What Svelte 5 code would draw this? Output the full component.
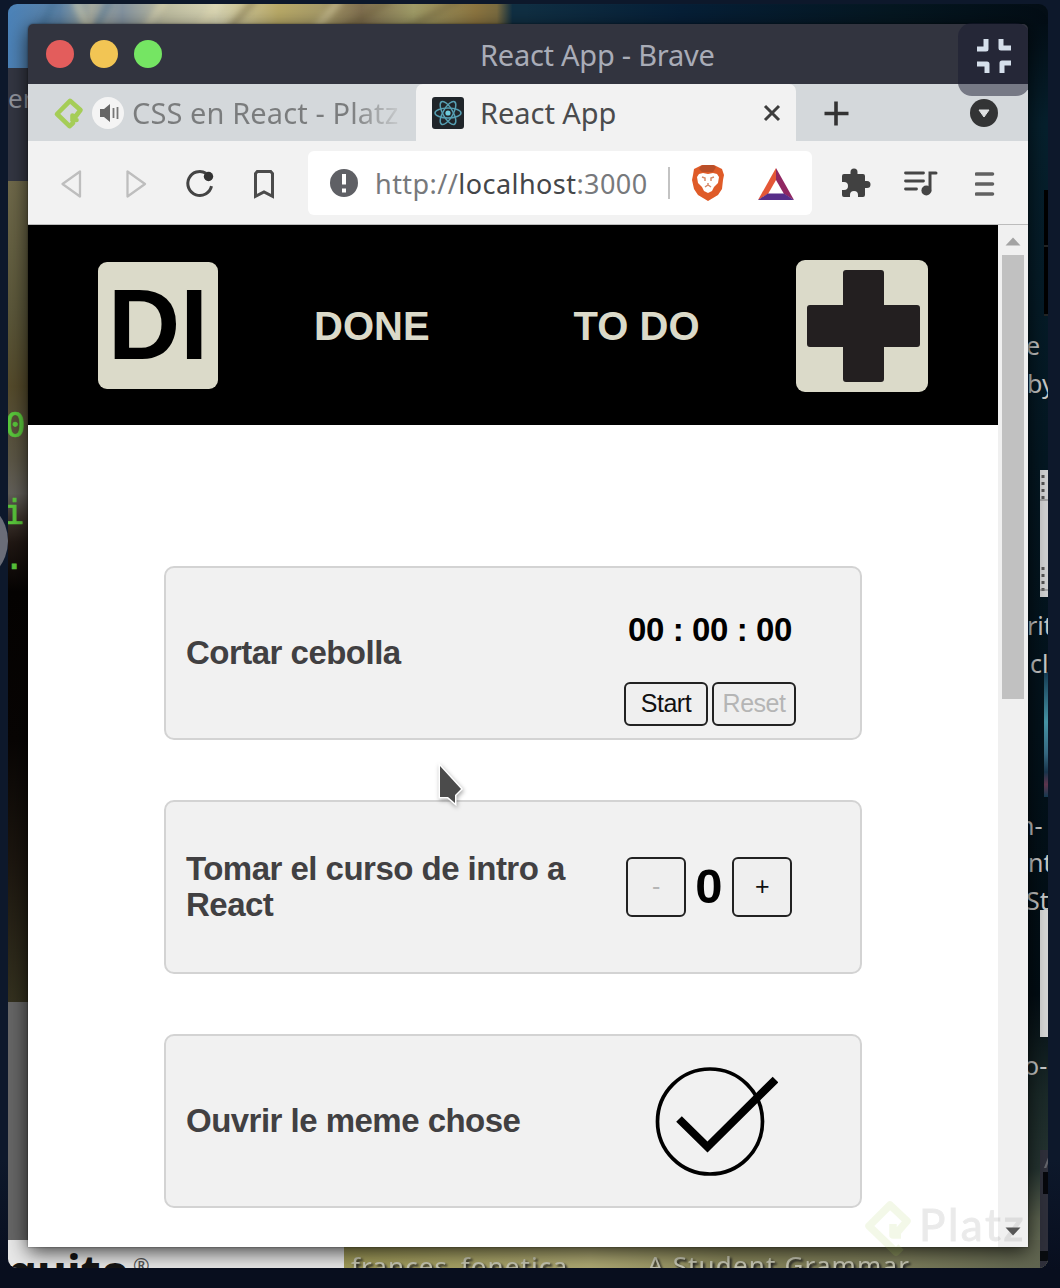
<script>
  const petals = [0, 60, 120];
  const brackets = [0, 90, 180, 270];
</script>

<main class="screen">
  <div class="side-handle"></div>
  <section class="desktop">
    <svg class="wallpaper" viewBox="8 4 1040 1264" width="1040" height="1264">
      <defs>
        <linearGradient id="top" x1="0" x2="1">
          <stop offset="0" stop-color="#4b82b8" /><stop offset=".1" stop-color="#5d83a6" />
          <stop offset=".16" stop-color="#a5aaa0" /><stop offset=".22" stop-color="#8493a0" />
          <stop offset=".3" stop-color="#bdbca0" /><stop offset=".4" stop-color="#d8d5b4" />
          <stop offset=".52" stop-color="#b9aa68" /><stop offset=".6" stop-color="#a89c69" />
          <stop offset=".68" stop-color="#806f50" /><stop offset=".78" stop-color="#a09c68" />
          <stop offset=".9" stop-color="#8c7540" /><stop offset=".94" stop-color="#7b6c40" /><stop offset=".97" stop-color="#102f43" /><stop offset="1" stop-color="#102f43" />
        </linearGradient>
        <linearGradient id="topRight" x1="0" x2="1">
          <stop offset="0" stop-color="#102f43" /><stop offset=".3" stop-color="#061f37" /><stop offset=".7" stop-color="#051721" /><stop offset="1" stop-color="#030d15" />
        </linearGradient>
        <linearGradient id="left" x1="0" y1="0" x2="0" y2="1">
          <stop offset="0" stop-color="#6f694a" /><stop offset=".16" stop-color="#5b573a" />
          <stop offset=".25" stop-color="#544a2b" /><stop offset=".34" stop-color="#5b5646" />
          <stop offset=".38" stop-color="#625f59" /><stop offset=".41" stop-color="#3e352e" />
          <stop offset=".44" stop-color="#201713" /><stop offset=".5" stop-color="#050302" />
          <stop offset=".68" stop-color="#080504" /><stop offset=".83" stop-color="#1c160f" /><stop offset="1" stop-color="#34311f" />
        </linearGradient>
        <linearGradient id="right" x1="0" y1="0" x2="0" y2="1">
          <stop offset="0" stop-color="#030e16" /><stop offset=".08" stop-color="#06202d" />
          <stop offset=".35" stop-color="#041722" /><stop offset=".78" stop-color="#020d14" />
          <stop offset=".86" stop-color="#1a2928" /><stop offset=".92" stop-color="#253431" />
          <stop offset=".96" stop-color="#5b624f" /><stop offset="1" stop-color="#737a5f" />
        </linearGradient>
        <linearGradient id="bottom" x1="0" x2="1">
          <stop offset="0" stop-color="#9f9a58" /><stop offset=".35" stop-color="#aea973" />
          <stop offset=".55" stop-color="#89875b" /><stop offset=".8" stop-color="#7c7d5b" /><stop offset="1" stop-color="#5f6450" />
        </linearGradient>
        <linearGradient id="thumb" x1="0" y1="0" x2="0" y2="1">
          <stop offset="0" stop-color="#153c55" /><stop offset=".4" stop-color="#4796a8" /><stop offset=".65" stop-color="#376b84" /><stop offset=".8" stop-color="#18354c" /><stop offset=".9" stop-color="#60364e" /><stop offset="1" stop-color="#153b52" />
        </linearGradient>
        <filter id="soft"><feGaussianBlur stdDeviation="3" /></filter>
      </defs>
      <rect x="524" y="4" width="524" height="64" fill="url(#topRight)" />
      <rect x="8" y="4" width="520" height="64" fill="url(#top)" />
      <g filter="url(#soft)" fill="none" stroke-width="7" opacity=".45">
        <path d="M55 0 40 30M110 0 90 40" stroke="#3c6992" />
        <path d="M75 0 90 34M165 0 145 30M220 0 195 35M340 0 315 30" stroke="#e5ddb2" />
        <path d="M255 0 230 28M390 0 340 32M460 0 400 32" stroke="#71643d" />
      </g>
      <rect x="8" y="68" width="30" height="113" fill="#333642" />
      <rect x="8" y="181" width="30" height="822" fill="url(#left)" />
      <rect x="8" y="1002" width="30" height="240" fill="#666" />
      <rect x="1020" y="24" width="28" height="1244" fill="url(#right)" />
      <rect x="8" y="1240" width="336" height="28" fill="#e8e8e8" />
      <rect x="344" y="1240" width="704" height="28" fill="url(#bottom)" />
      <rect x="1044" y="190" width="4" height="126" fill="#000" />
      <path d="M1044 246h4M1044 315h4" stroke="#464b4b" />
      <rect x="1040" y="470" width="8" height="127" fill="#d0d1d2" />
      <path d="M1043 475v25M1043 567v27" stroke="#555" stroke-width="3" stroke-dasharray="3 4" />
      <path d="M1040 500h8M1040 590h8" stroke="#777" />
      <rect x="1044" y="672" width="4" height="125" fill="url(#thumb)" />
      <rect x="1040" y="910" width="8" height="127" fill="#d6d7d6" />
      <rect x="1040" y="1150" width="8" height="118" fill="#2f303b" />
      <rect x="1043" y="1172" width="5" height="22" fill="#07080d" />
      <path d="M1040 1256h8" stroke="#090c10" stroke-width="10" />

      <g class="icon-text">
        <text x="1026" y="355">e</text><text x="1027" y="393">by</text>
        <text x="1027" y="635">rit</text><text x="1030" y="673">cl</text>
        <text x="1019" y="835">n-</text><text x="1028" y="872">nt</text>
        <text x="1026" y="910">St</text><text x="1024" y="1075">o-</text>
        <text x="1044" y="1168" opacity=".35">A</text>
      </g>
      <text x="8" y="108" class="window-text">en</text>
      <g class="terminal"><text x="5" y="437">0</text><text x="4" y="524">i</text><text x="4" y="569">.</text></g>
      <text x="8" y="1289" class="brand">quito</text><text x="133" y="1273" class="registered">®</text>
      <g class="desktop-label">
        <text x="351" y="1276" textLength="216">frances_fonetica</text>
        <text x="647" y="1275" textLength="262">A Student Grammar</text>
      </g>
    </svg>

    <article class="window">
      <header class="titlebar">
        <div class="lights"><i class="red"></i><i class="yellow"></i><i class="green"></i></div>
        <span class="window-title">React App - Brave</span>
      </header>

      <nav class="tabs">
        <div class="tab muted">
          <svg width="32" height="34" viewBox="0 0 32 34"><path d="M20.500 24.500 28.500 14 18 4.800 5 18 17.500 30.200l3.500-3.200M20.500 19.500v4.500h4" fill="none" stroke="#a5cd57" stroke-width="4.600" stroke-linejoin="round" stroke-linecap="round" /></svg>
          <svg class="audio" width="32" height="32" viewBox="0 0 32 32"><circle cx="16" cy="16" r="16" fill="#f4f4f4" /><path d="M8 12h4l6-5v18l-6-5H8z" fill="#666" /><path d="M21.500 11v10M25.500 10v12" stroke="#777" stroke-width="1.800" /></svg>
          <span class="tab-title faded">CSS en React - Platz</span>
        </div>
        <div class="tab active">
          <svg width="32" height="32" viewBox="0 0 32 32">
            <rect width="32" height="32" rx="3" fill="#20252a" />
            <g fill="none" stroke="#569fb3" stroke-width="1.500">
              {#each petals as angle}<ellipse cx="16" cy="16" rx="13" ry="5" transform="rotate({angle} 16 16)" />{/each}
            </g><circle cx="16" cy="16" r="2.600" fill="#70cbdc" />
          </svg>
          <span class="tab-title current">React App</span>
          <svg class="close" width="20" height="20" viewBox="0 0 20 20"><path d="m3 3 14 14M17 3 3 17" stroke="#3d3d3d" stroke-width="3" /></svg>
        </div>
        <svg class="new-tab" width="26" height="26" viewBox="0 0 26 26"><path d="M13 1.500v24M1.500 13.500h24" stroke="#333" stroke-width="3.600" /></svg>
        <svg class="tab-menu" width="28" height="28" viewBox="0 0 28 28"><circle cx="14" cy="14" r="14" fill="#333435" /><path d="M9 11h10L14 18z" fill="#dfe1e2" stroke="#dfe1e2" stroke-linejoin="round" /></svg>
      </nav>

      <div class="toolbar">
        <div class="nav-icons">
          <svg width="32" height="32" viewBox="0 0 32 32"><path d="M24 4.500v25L6.500 17z" fill="none" stroke="#bebebe" stroke-width="2.300" stroke-linejoin="round" /></svg>
          <svg width="32" height="32" viewBox="0 0 32 32"><path d="M7.500 4.500v25L25 17z" fill="none" stroke="#bebebe" stroke-width="2.300" stroke-linejoin="round" /></svg>
          <svg width="32" height="32" viewBox="0 0 32 32"><path d="M22 6.200a12 12 0 1 0 5.500 13" fill="none" stroke="#444" stroke-width="3" /><circle cx="24.500" cy="9.500" r="4.700" fill="#333" /></svg>
          <svg width="32" height="32" viewBox="0 0 32 32"><path d="M7.500 29.300V6.500l1.800-2h13.400l1.800 2v22.800L16 25z" fill="none" stroke="#4b4b4b" stroke-width="3" /></svg>
        </div>
        <div class="address">
          <svg width="28" height="28" viewBox="0 0 28 28"><circle cx="14" cy="14" r="14" fill="#5f6065" /><path d="M14 5v10.500M14 19.500v4" stroke="#fff" stroke-width="4" /></svg>
          <span class="url">http://<b>localhost</b>:3000</span>
          <i class="separator"></i>
          <svg class="brave" width="34" height="38" viewBox="0 0 34 38"><path d="m7 3 4-2h12l4 2 4 2 2 6-1 5-1 9-4 6-10 6-10-6-4-6-2-9 1-5 1-6z" fill="#df5b28" /><path d="m10 2 3-1h9l3 2-3 5H11L8 5z" fill="#b94f29" /><path d="m8 10 4-1 5 1 5-1 4 1 2 3-1 6-4 4-2 4-4 2-4-2-2-4-4-4-1-6z" fill="#fff" /><path d="m11 13 3 1v3M23 13l-3 1v3M17 19v3m-3 1 3-2 3 2" fill="none" stroke="#d68a6a" stroke-width="1.500" /></svg>
          <svg class="bat" width="36" height="32" viewBox="0 0 36 32"><path d="M18 0 0 32l10-6 8-14z" fill="#e45737" /><path d="m18 0 18 32-10-6-8-14z" fill="#902762" /><path d="m0 32 10-6.500h16L36 32z" fill="#572e89" /></svg>
        </div>
        <svg class="extension" width="30" height="30" viewBox="0 0 30 30"><path d="M3 6h6.500V4a3.500 3.500 0 0 1 7 0v2h5.500q2 0 2 2v5h2a3.500 3.500 0 0 1 0 7h-2v7q0 2-2 2h-5v-2a3.500 3.500 0 0 0-8 0v2H3q-2 0-2-2v-5h2a4 4 0 0 0 0-8H1V8q0-2 2-2z" fill="#414141" /></svg>
        <svg class="playlist" width="34" height="28" viewBox="0 0 34 28"><path d="M1.500 4h18M1.500 12h18M1.500 20h11" stroke="#454545" stroke-width="2.800" stroke-linecap="round" /><path d="M26 22V4h6" fill="none" stroke="#454545" stroke-width="3" stroke-linecap="round" /><circle cx="22.300" cy="21.500" r="4.900" fill="#454545" /></svg>
        <svg class="menu" width="20" height="26" viewBox="0 0 20 26"><path d="M1.500 4h16M1.500 14h16M1.500 24h16" stroke="#616161" stroke-width="3.600" stroke-linecap="round" /></svg>
      </div>

      <div class="viewport">
        <div class="page">
          <header class="app-header">
            <div class="logo">DI</div>
            <div class="links"><span>DONE</span><span>TO DO</span></div>
            <div class="add"><svg width="132" height="132" viewBox="0 0 132 132"><path d="M50 10h35q3 0 3 3v32h33q3 0 3 3v36q0 3-3 3H88v32q0 3-3 3H50q-3 0-3-3V87H14q-3 0-3-3V48q0-3 3-3h33V13q0-3 3-3z" fill="#231f20" /></svg></div>
          </header>
          <div class="cards">
            <section class="card">
              <h2>Cortar cebolla</h2>
              <div class="timer"><strong>00 : 00 : 00</strong><div class="buttons"><button>Start</button><button disabled>Reset</button></div></div>
            </section>
            <section class="card">
              <h2>Tomar el curso de intro a React</h2>
              <div class="counter"><button disabled>-</button><strong>0</strong><button>+</button></div>
            </section>
            <section class="card">
              <h2>Ouvrir le meme chose</h2>
              <svg class="check" width="124" height="112" viewBox="0 0 124 112"><circle cx="56" cy="56.500" r="52.500" fill="none" stroke="#000" stroke-width="3.700" /><path d="M25 54 53.500 82 121.500 14.500" fill="none" stroke="#000" stroke-width="8" /></svg>
            </section>
          </div>
        </div>
        <aside class="scrollbar">
          <svg width="30" height="30" viewBox="0 0 30 30"><path d="M7.500 20.500 15 12.500l7.500 8z" fill="#a3a3a3" /></svg>
          <i></i>
          <svg class="down" width="30" height="30" viewBox="0 0 30 30"><path d="M7.500 10.500h15l-7.500 8z" fill="#555" /></svg>
        </aside>
      </div>
    </article>

    <div class="watermark">
      <svg width="52" height="60" viewBox="0 0 52 60"><path d="M33 39 45 25 28 9 7 30l27 26 5-5M31 28v11h8" fill="none" stroke="#a7cb55" stroke-width="7.500" stroke-linejoin="round" /></svg>
      <span>Platz</span>
    </div>
    <svg class="cursor" width="34" height="46" viewBox="0 0 34 46"><path d="M5 5v31h8l7 6v-8l6-6z" fill="#4b4b4b" stroke="#fff" stroke-width="3" paint-order="stroke" /></svg>
    <div class="shrink">
      <svg width="34" height="36" viewBox="-17 -18 34 36">
        {#each brackets as angle}<path d="M7-17v9h10" transform="rotate({angle})" fill="none" stroke="#d5dfeb" stroke-width="5" stroke-linejoin="round" />{/each}
      </svg>
    </div>
  </section>
</main>

<style>
  :global(body) { margin: 0; background: #0d172a; }
  :global(*) { box-sizing: border-box; }
  svg { display: block; flex: none; }
  .screen { position: relative; width: 1060px; height: 1288px; padding: 4px 12px 20px 8px; overflow: hidden; background: linear-gradient(#0d182b 0 1160px, #080e1e 1270px); font-family: "Liberation Sans", Arial, sans-serif; }
  .side-handle { position: absolute; left: -68px; top: 500px; width: 76px; height: 82px; border-radius: 50%; background: #6a6d78; }
  .desktop { position: relative; width: 1040px; height: 1264px; overflow: hidden; border-radius: 9px; }
  .wallpaper { position: absolute; inset: 0; }
  .icon-text { font: 25px "Noto Sans", sans-serif; fill: #c8c9c9; }
  .window-text { font: 26px "Noto Sans", sans-serif; fill: #91949d; }
  .terminal { font: bold 34px "DejaVu Sans Mono", monospace; fill: #5ac93c; }
  .terminal text { font-weight: 400; stroke: #5ac93c; stroke-width: .7px; }
  .brand { font: bold 46px "Noto Sans", sans-serif; fill: #151515; }
  .registered { font: 20px "Noto Sans", sans-serif; fill: #555; }
  .desktop-label { font: 26px "Noto Sans", sans-serif; fill: #c9c9b5; filter: drop-shadow(2px 2px 1px #222); }
  .window { position: absolute; left: 20px; top: 20px; width: 1000px; height: 1223px; border-radius: 5px 5px 0 0; overflow: hidden; box-shadow: 0 5px 20px #000b, 0 0 2px #0008; }
  .titlebar { height: 60px; padding: 0 32px 0 18px; display: flex; align-items: center; background: #32343f; }
  .lights { display: flex; gap: 16px; }
  .lights i { width: 28px; height: 28px; border-radius: 50%; }
  .red { background: #e35d5c; } .yellow { background: #f2c554; } .green { background: #75e563; }
  .window-title { margin-left: 318px; color: #a9acb7; font: 29px/60px "Noto Sans", sans-serif; letter-spacing: -.25px; white-space: pre; padding-top: 2px; }
  .tabs { height: 57px; display: flex; align-items: center; background: #d4d8db; }
  .tab { height: 57px; display: flex; align-items: center; }
  .muted { width: 388px; padding-left: 24px; }
  .audio { margin-left: 8px; }
  .tab-title { font: 29px/57px "Noto Sans", sans-serif; letter-spacing: -.05px; white-space: pre; }
  .faded { margin-left: 8px; width: 272px; overflow: hidden; color: transparent; background: linear-gradient(90deg, #7a7c7d 80%, #c7cacc 98%); background-clip: text; letter-spacing: .1px; }
  .active { width: 380px; padding: 0 14px 0 16px; background: #f2f2f2; border-radius: 7px 7px 0 0; }
  .current { margin-left: 16px; color: #4a4b4d; }
  .close { margin-left: auto; }
  .new-tab { margin-left: 27px; }
  .tab-menu { margin: 0 30px 0 auto; }
  .toolbar { height: 84px; padding: 0 33px 0 28px; display: flex; align-items: center; background: #f2f2f2; border-bottom: 1px solid #bcbcbc; }
  .nav-icons { display: flex; gap: 32px; }
  .address { width: 504px; height: 64px; display: flex; align-items: center; margin-left: 28px; padding: 0 18px 0 22px; background: #fff; border-radius: 6px; }
  .url { width: 272px; margin-left: 17px; color: #77797c; font: 27px/62px "Noto Sans", sans-serif; letter-spacing: .45px; padding-top: 2px; white-space: pre; }
  .url b { color: #444649; font-weight: 400; }
  .separator { width: 2px; height: 32px; margin-left: 21px; background: #c3c3c3; }
  .brave { margin-left: 21px; }
  .bat { margin-left: auto; margin-top: 3px; }
  .extension { margin-left: 29px; }
  .playlist { margin-left: 33px; }
  .menu { margin-left: auto; }
  .viewport { height: 1022px; display: flex; background: #fff; }
  .page { width: 970px; }
  .app-header { height: 200px; padding: 1px 70px 0; display: flex; align-items: center; background: #000; }
  .logo { width: 120px; height: 127px; border-radius: 9px; background: #dbdac9; font: bold 100px/124px "Liberation Sans", sans-serif; text-align: center; padding-left: 0; color: #000; }
  .links { display: flex; gap: 144px; margin-left: 96px; padding-top: 2px; color: #dbdac9; font-size: 40px; font-weight: bold; }
  .add { width: 132px; height: 132px; margin-left: auto; border-radius: 9px; background: #dbdac9; }
  .cards { display: flex; flex-direction: column; gap: 60px; padding: 141px 136px 0; }
  .card { height: 174px; display: flex; align-items: center; padding: 0 0 0 20px; background: #f1f1f1; border: 2px solid #d3d3d3; border-radius: 10px; }
  h2 { width: 420px; margin: 0; color: #414042; font-size: 33px; line-height: 36px; letter-spacing: -.52px; }
  .timer { width: 172px; margin-left: 18px; padding-top: 44px; display: flex; flex-direction: column; align-items: center; align-self: flex-start; }
  .timer strong { font-size: 33px; line-height: 36px; letter-spacing: -.4px; }
  .buttons { display: flex; gap: 4px; margin-top: 34px; }
  button { width: 84px; height: 44px; padding: 0 0 2px; color: #111; background: #efefef; border: 2px solid #222; border-radius: 6px; font: 25px "Liberation Sans", sans-serif; letter-spacing: -.5px; }
  button:disabled { color: #b5b5b5; }
  .counter { display: flex; align-items: center; margin-left: 20px; }
  .counter button { width: 60px; height: 60px; }
  .counter strong { width: 46px; text-align: center; font-size: 49px; line-height: 60px; margin-top: -2px; }
  .check { margin-left: 48px; }
  .scrollbar { width: 30px; display: flex; flex-direction: column; background: #f0f0f0; }
  .scrollbar i { width: 22px; height: 444px; margin-left: 4px; background: #c1c1c1; }
  .down { margin-top: auto; }
  .watermark { position: absolute; left: 854px; top: 1192px; width: 166px; height: 60px; display: flex; align-items: center; overflow: hidden; opacity: .13; }
  .watermark span { margin-left: 5px; color: #666; font: 44px/56px Lato, sans-serif; letter-spacing: 2.6px; -webkit-text-stroke: 1px #666; padding-bottom: 4px; }
  .cursor { position: absolute; left: 427px; top: 757px; filter: drop-shadow(1px 2px 2px #0005); }
  .shrink { position: absolute; left: 950px; top: 19px; width: 72px; height: 73px; display: flex; align-items: center; justify-content: center; padding-bottom: 8px; border-radius: 14px; background: #171a3080; clip-path: inset(0 2px 0 0); }
</style>
